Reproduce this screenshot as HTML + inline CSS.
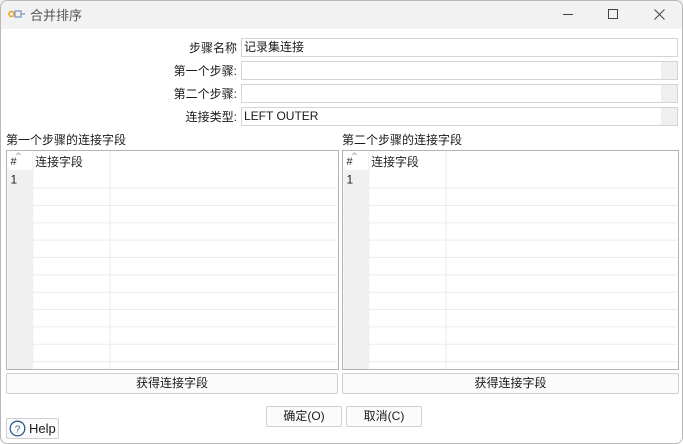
<!DOCTYPE html>
<html><head><meta charset="utf-8"><style>
*{margin:0;padding:0;box-sizing:border-box}
body{width:683px;height:444px;background:#fff;font-family:"Liberation Sans","Noto Sans CJK SC",sans-serif;font-size:12px;color:#1a1a1a;position:relative;overflow:hidden}
.win{position:absolute;left:0;top:0;width:683px;height:444px;background:#fff;overflow:hidden}
.frame{position:absolute;left:0;top:0;width:683px;height:444px;border:1px solid #b8b8b8;border-radius:7px;pointer-events:none}
.title{position:absolute;left:0;top:0;width:683px;height:29px;background:#f2f2f2}
.a{position:absolute}
.lbl{position:absolute;right:446px;text-align:right;white-space:nowrap}
.inp{position:absolute;left:241px;width:437px;height:19px;border:1px solid #d4d4d4;background:#fff;padding-left:2px;line-height:17px}
.inp .dd{position:absolute;right:0;top:0;width:16px;height:17px;background:#efefef}
.tbl{position:absolute;top:150px;height:220px;border:1px solid #b4b4b4;background:#fff;overflow:hidden}
.btn{position:absolute;height:21px;border:1px solid #d0d0d0;background:#fbfbfb;text-align:center;line-height:19px;border-radius:2px}
</style></head><body><div class="win">
<div class="title"></div>
<svg class="a" style="left:8px;top:8px" width="18" height="12" viewBox="0 0 18 12"><circle cx="3.5" cy="6" r="2.5" fill="none" stroke="#e8a020" stroke-width="1.5"/><rect x="7" y="3" width="6" height="6" fill="none" stroke="#7a9ac0" stroke-width="1.3"/><path d="M13 6h4" stroke="#7a9ac0" stroke-width="1.3"/></svg>
<div class="a" style="left:30px;top:5px;font-size:13px;color:#555">合并排序</div>
<div class="a" style="left:563px;top:14px;width:10px;height:1px;background:#444"></div>
<div class="a" style="left:608px;top:9px;width:10px;height:10px;border:1px solid #444"></div>
<svg class="a" style="left:654px;top:9px" width="11" height="11"><path d="M0.5 0.5L10.5 10.5M10.5 0.5L0.5 10.5" stroke="#444" stroke-width="1"/></svg>

<div class="lbl" style="top:39px">步骤名称</div>
<div class="lbl" style="top:62px">第一个步骤:</div>
<div class="lbl" style="top:85px">第二个步骤:</div>
<div class="lbl" style="top:108px">连接类型:</div>
<div class="inp" style="top:38px">记录集连接</div>
<div class="inp" style="top:61px"><div class="dd"></div></div>
<div class="inp" style="top:84px"><div class="dd"></div></div>
<div class="inp" style="top:107px">LEFT OUTER<div class="dd"></div></div>

<div class="a" style="left:6px;top:131px">第一个步骤的连接字段</div>
<div class="a" style="left:342px;top:131px">第二个步骤的连接字段</div>

<svg class="tbl" style="left:6px;width:333px" viewBox="0 0 333 220" width="333" height="220">
<rect x="0" y="19" width="25" height="201" fill="#f0f0f0"/>
<g stroke="#ececec" stroke-width="1">
<path d="M25.5 0V220M103.5 0V220"/>
<path d="M0 37.5H333M0 55H333M0 72.5H333M0 90H333M0 107.5H333M0 125H333M0 142.5H333M0 160H333M0 177.5H333M0 195H333M0 212.5H333"/>
</g>
<path d="M9 4l2-2 2 2" fill="none" stroke="#999" stroke-width="0.8"/>
<text x="3" y="14" font-size="11" font-family="Liberation Sans" fill="#222">#</text>
<text x="28" y="15" font-size="12" font-family="Liberation Sans,Noto Sans CJK SC,sans-serif" fill="#222">连接字段</text>
<text x="3" y="33" font-size="12" font-family="Liberation Sans" fill="#222">1</text>
</svg>
<svg class="tbl" style="left:342px;width:337px" viewBox="0 0 337 220" width="337" height="220">
<rect x="0" y="19" width="25" height="201" fill="#f0f0f0"/>
<g stroke="#ececec" stroke-width="1">
<path d="M25.5 0V220M103.5 0V220"/>
<path d="M0 37.5H337M0 55H337M0 72.5H337M0 90H337M0 107.5H337M0 125H337M0 142.5H337M0 160H337M0 177.5H337M0 195H337M0 212.5H337"/>
</g>
<path d="M9 4l2-2 2 2" fill="none" stroke="#999" stroke-width="0.8"/>
<text x="3" y="14" font-size="11" font-family="Liberation Sans" fill="#222">#</text>
<text x="28" y="15" font-size="12" font-family="Liberation Sans,Noto Sans CJK SC,sans-serif" fill="#222">连接字段</text>
<text x="3" y="33" font-size="12" font-family="Liberation Sans" fill="#222">1</text>
</svg>

<div class="btn" style="left:6px;top:373px;width:332px">获得连接字段</div>
<div class="btn" style="left:342px;top:373px;width:337px">获得连接字段</div>
<div class="btn" style="left:266px;top:406px;width:76px">确定(O)</div>
<div class="btn" style="left:346px;top:406px;width:76px">取消(C)</div>
<div class="btn" style="left:6px;top:418px;width:53px;text-align:left;padding-left:22px;font-size:13px">Help</div>
<svg class="a" style="left:9px;top:420px" width="17" height="17"><circle cx="8.5" cy="8.5" r="7.3" fill="#fff" stroke="#2a5a8a" stroke-width="1.3"/><text x="8.5" y="12.5" font-size="10" text-anchor="middle" fill="#2a5a8a" font-family="Liberation Sans">?</text></svg>
</div><div class="frame"></div></body></html>
